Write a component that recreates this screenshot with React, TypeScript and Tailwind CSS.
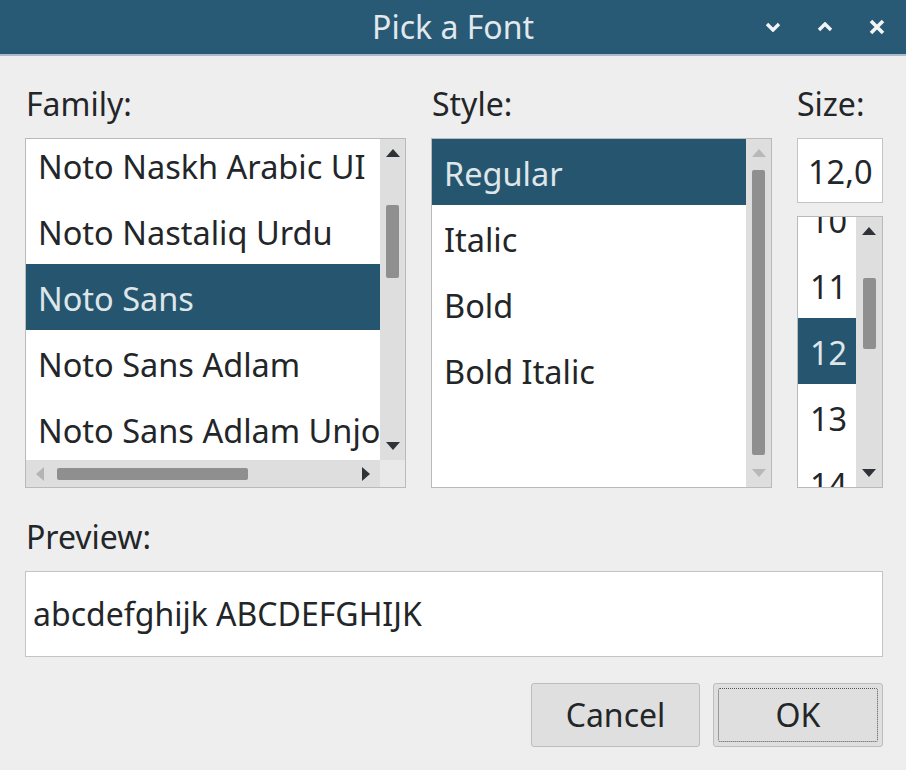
import React from "react";

type Dir = "up" | "down" | "left" | "right";

function Tri({ dir, color }: { dir: Dir; color: string }) {
  const pts: Record<Dir, string> = {
    up: "0,8 7,0 14,8",
    down: "0,0 14,0 7,8",
    left: "8,0 8,14 0,7",
    right: "0,0 8,7 0,14",
  };
  const vertical = dir === "up" || dir === "down";
  return (
    <svg width={vertical ? 14 : 8} height={vertical ? 8 : 14} viewBox={vertical ? "0 0 14 8" : "0 0 8 14"}>
      <polygon points={pts[dir]} fill={color} />
    </svg>
  );
}

function VScroll({
  upColor,
  downColor,
  thumbTop,
  thumbHeight,
}: {
  upColor: string;
  downColor: string;
  thumbTop: number;
  thumbHeight: number;
}) {
  return (
    <div className="flex h-full flex-col bg-[#dedede]">
      <div className="flex h-[28px] shrink-0 items-center justify-center">
        <Tri dir="up" color={upColor} />
      </div>
      <div className="flex-1">
        <div
          className="mx-auto w-[13px] rounded-[2px] bg-[#8f8f8f]"
          style={{ marginTop: thumbTop, height: thumbHeight }}
        />
      </div>
      <div className="flex h-[28px] shrink-0 items-center justify-center">
        <Tri dir="down" color={downColor} />
      </div>
    </div>
  );
}

function Item({ text, selected }: { text: string; selected?: boolean }) {
  return (
    <div
      className={
        "h-[66px] whitespace-nowrap pl-[12px] text-[32.5px] leading-[70px] " +
        (selected ? "bg-[#26566f] text-[#dfe6ea]" : "text-[#232629]")
      }
    >
      {text}
    </div>
  );
}

function Label({ text }: { text: string }) {
  return <div className="h-[44px] whitespace-nowrap text-[32px] leading-[44px] text-[#232629]">{text}</div>;
}

export default function App() {
  return (
    <div className="flex h-[770px] w-[906px] flex-col overflow-hidden bg-[#eeeeee] font-['Noto_Sans',sans-serif]">
      {/* Title bar */}
      <div className="relative h-[54px] shrink-0 bg-[#285a76]">
        <div className="pt-[5px] text-center text-[32px] leading-[44px] text-[#e2e8ec]">Pick a Font</div>
        <div className="absolute right-[3px] top-0 flex h-[54px] items-center">
          <div className="flex w-[52px] justify-center">
            <svg width="16" height="10" viewBox="0 0 16 10">
              <path d="M2 2 L8 8 L14 2" fill="none" stroke="#f2f4f5" strokeWidth="3.4" />
            </svg>
          </div>
          <div className="flex w-[52px] justify-center">
            <svg width="16" height="10" viewBox="0 0 16 10">
              <path d="M2 8 L8 2 L14 8" fill="none" stroke="#f2f4f5" strokeWidth="3.4" />
            </svg>
          </div>
          <div className="flex w-[52px] justify-center">
            <svg width="16" height="16" viewBox="0 0 16 16">
              <path d="M2 2 L14 14 M14 2 L2 14" fill="none" stroke="#f2f4f5" strokeWidth="3.6" />
            </svg>
          </div>
        </div>
      </div>
      <div className="h-[2px] shrink-0 bg-[#a9bcc8]" />

      {/* Body */}
      <div className="flex flex-col pl-[25px] pr-[23px] pt-[26px]">
        <div className="flex gap-[25px]">
          {/* Family */}
          <div className="flex w-[381px] flex-col">
            <div className="pl-[1px]">
              <Label text="Family:" />
            </div>
            <div className="mt-[12px] grid h-[350px] grid-cols-[1fr_25px] grid-rows-[1fr_27px] border border-[#bababa]">
              <div className="overflow-hidden bg-white">
                <div className="-mt-[7px]">
                  <Item text="Noto Naskh Arabic UI" />
                  <Item text="Noto Nastaliq Urdu" />
                  <Item text="Noto Sans" selected />
                  <Item text="Noto Sans Adlam" />
                  <Item text="Noto Sans Adlam Unjoined" />
                </div>
              </div>
              <VScroll upColor="#2f3337" downColor="#2f3337" thumbTop={38} thumbHeight={73} />
              <div className="flex items-center bg-[#dedede]">
                <div className="flex w-[28px] justify-center">
                  <Tri dir="left" color="#b4b4b4" />
                </div>
                <div className="ml-[3px] h-[12px] w-[191px] rounded-[2px] bg-[#8f8f8f]" />
                <div className="flex-1" />
                <div className="flex w-[28px] justify-center">
                  <Tri dir="right" color="#2f3337" />
                </div>
              </div>
              <div className="bg-[#e9e9e9]" />
            </div>
          </div>

          {/* Style */}
          <div className="flex w-[341px] flex-col">
            <div className="pl-[1px]">
              <Label text="Style:" />
            </div>
            <div className="mt-[12px] grid h-[350px] grid-cols-[1fr_25px] border border-[#bababa]">
              <div className="overflow-hidden bg-white">
                <Item text="Regular" selected />
                <Item text="Italic" />
                <Item text="Bold" />
                <Item text="Bold Italic" />
              </div>
              <VScroll upColor="#b8b8b8" downColor="#b8b8b8" thumbTop={3} thumbHeight={285} />
            </div>
          </div>

          {/* Size */}
          <div className="flex w-[86px] flex-col">
            <Label text="Size:" />
            <div className="mt-[12px] h-[65px] border border-[#c4c4c4] bg-white pl-[10px] text-[32.5px] leading-[65px] text-[#232629]">
              12,0
            </div>
            <div className="mt-[13px] grid h-[272px] grid-cols-[1fr_26px] border border-[#bababa]">
              <div className="overflow-hidden bg-white">
                <div className="-mt-[31px]">
                  <Item text="10" />
                  <Item text="11" />
                  <Item text="12" selected />
                  <Item text="13" />
                  <Item text="14" />
                </div>
              </div>
              <VScroll upColor="#2f3337" downColor="#2f3337" thumbTop={33} thumbHeight={71} />
            </div>
          </div>
        </div>

        {/* Preview */}
        <div className="mt-[27px] pl-[1px]">
          <Label text="Preview:" />
        </div>
        <div className="mt-[12px] h-[86px] border border-[#c4c4c4] bg-white pl-[7px] text-[32px] leading-[84px] text-[#232629]">
          abcdefghijk ABCDEFGHIJK
        </div>

        {/* Buttons */}
        <div className="mt-[26px] flex justify-end gap-[13px]">
          <div className="flex h-[64px] w-[169px] items-center justify-center rounded-[3px] border border-[#bdbdbd] bg-[#dfdfdf] text-[32px] text-[#232629]">
            Cancel
          </div>
          <div className="flex h-[64px] w-[170px] rounded-[3px] border border-[#bdbdbd] bg-[#dfdfdf] p-[4px]">
            <div className="flex flex-1 items-center justify-center rounded-[2px] border border-dotted border-[#555555] text-[32px] text-[#232629]">
              OK
            </div>
          </div>
        </div>
      </div>
    </div>
  );
}
